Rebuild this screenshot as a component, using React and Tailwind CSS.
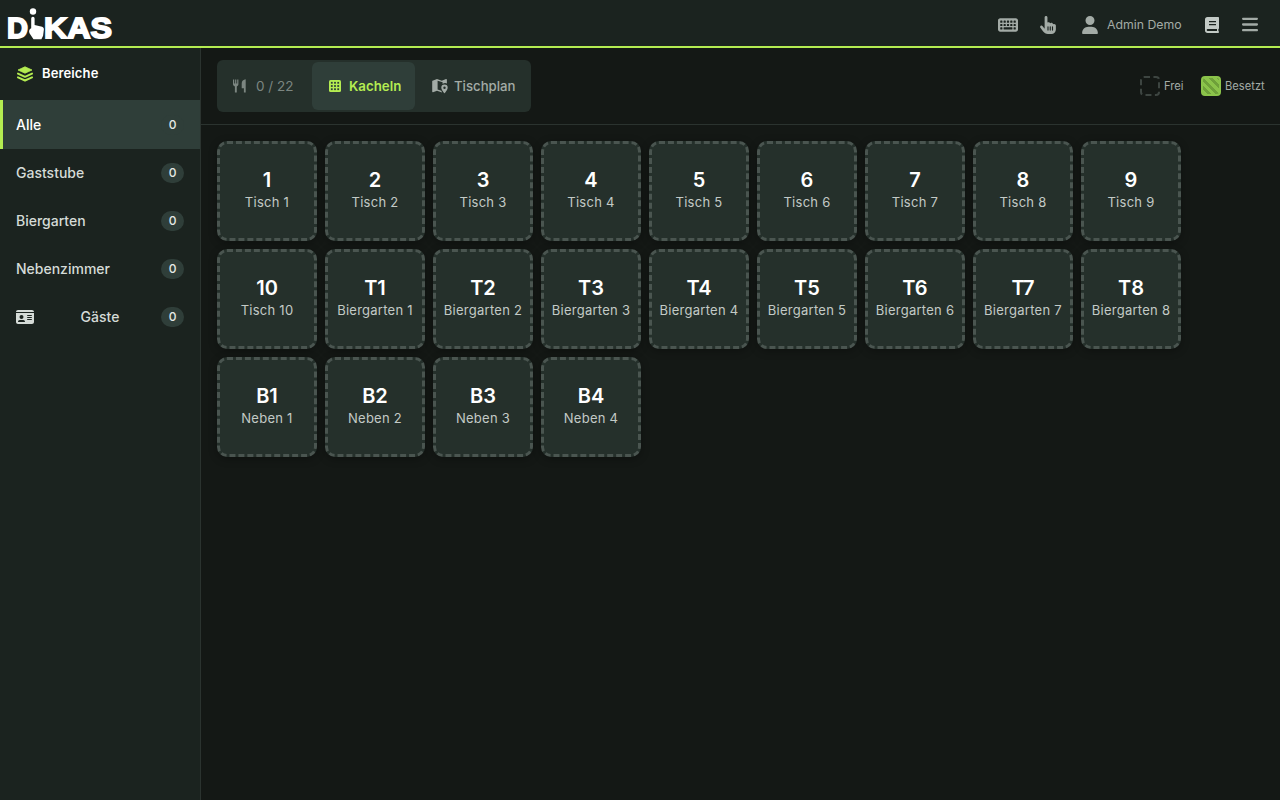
import { FaKeyboard, FaHandPointer, FaUser, FaBars, FaIdCard } from 'react-icons/fa6';

const areas = ['Alle', 'Gaststube', 'Biergarten', 'Nebenzimmer'];

const tables = [
  ...Array.from({ length: 10 }, (_, i) => ({ id: `${i + 1}`, name: `Tisch ${i + 1}` })),
  ...Array.from({ length: 8 }, (_, i) => ({ id: `T${i + 1}`, name: `Biergarten ${i + 1}` })),
  ...Array.from({ length: 4 }, (_, i) => ({ id: `B${i + 1}`, name: `Neben ${i + 1}` })),
];

function Logo() {
  return (
    <svg width="106" height="38" viewBox="0 0 106 38" className="overflow-visible" fill="#fff">
      <g fontFamily="'Liberation Sans', Arial, sans-serif" fontWeight="700" fontSize="29.5" stroke="#fff" strokeWidth="1.8">
        <text x="-1" y="32.2" textLength="21" lengthAdjust="spacingAndGlyphs">D</text>
        <text x="36" y="32.2" textLength="68" lengthAdjust="spacingAndGlyphs">KAS</text>
      </g>
      <circle cx="25" cy="5.5" r="3.2" />
      <path
        d="M23.2 12.5a1.7 1.7 0 0 1 3.4 0V19l7.5 1.8c1.2.4 1.9 1.300 1.8 2.600l-.8 6.400-1.700 3.400H25.500l-4-6c-.9-2-.3-4.500 1.700-5z"
        stroke="#1b231f"
        strokeWidth="1.2"
        paintOrder="stroke"
      />
    </svg>
  );
}

function LayersIcon() {
  return (
    <svg width="16" height="16" viewBox="0 0 16 16" className="text-[#b4ec51]" fill="currentColor">
      <path d="M8 .8 15 4 8 7.2 1 4z" stroke="currentColor" strokeWidth=".8" strokeLinejoin="round" />
      <path d="M1 7.6 8 10.8l7-3.2M1 11.3l7 3.2 7-3.2" fill="none" stroke="currentColor" strokeWidth="2" strokeLinecap="round" strokeLinejoin="round" />
    </svg>
  );
}

function BookIcon() {
  return (
    <svg width="14" height="16" viewBox="0 0 14 16" className="text-[#c3cac6]" fill="currentColor">
      <path fillRule="evenodd" d="M2.5 0H13c.6 0 1 .4 1 1v10.200c0 .4-.2.700-.6.900v1.900c.5.2.6.5.6 1s-.4 1-1 1H2.700A2.700 2.700 0 0 1 0 13.300V2.500A2.500 2.500 0 0 1 2.500 0M4 4v1.300h7V4zm0 3v1.300h7V7zM2.700 12a1 1 0 0 0 0 2H12v-2z" />
    </svg>
  );
}

function UtensilsIcon() {
  return (
    <svg width="14" height="14" viewBox="0 0 14 14" fill="currentColor">
      <path d="M0 .4h1.200v4h.9v-4h1.200v4h.9v-4h1.200V5c0 1.300-.6 2.100-1.600 2.500v6H1.900v-6C.7 7.100 0 6.300 0 5zM12.700.2v13.300h-1.800V9.300H8.700V4.400c0-2.400 1.700-4 4-4.200" />
    </svg>
  );
}

function TilesIcon() {
  return (
    <svg width="12" height="12" viewBox="0 0 12 12">
      <rect width="12" height="12" rx="1.5" fill="currentColor" />
      <g fill="#2f3e39">
        {[1.9, 5.1, 8.3].map((y) =>
          [1.9, 5.1, 8.3].map((x) => <rect key={`${x}-${y}`} x={x} y={y} width="1.8" height="1.8" />)
        )}
      </g>
    </svg>
  );
}

function MapPinIcon() {
  return (
    <svg width="16" height="16" viewBox="0 0 16 16" fill="currentColor">
      <path
        fillRule="evenodd"
        d="M1.200 2.500 5 1.100l4.800 1.600L14 1.100c.5-.1.900.1.900.6v3.700a4.500 4.500 0 0 0-4.300.5V4.200L5.600 2.700v8.700l3.700 1.300.8 1.700-5.100-1.600-4 1.400c-.5.1-.8-.1-.8-.6V3.200c0-.3.300-.6 1-.7"
      />
      <path fillRule="evenodd" d="M12.500 6.500a3.200 3.200 0 0 1 3.200 3.200c0 2.200-3.200 5.600-3.200 5.600s-3.200-3.400-3.200-5.600a3.200 3.200 0 0 1 3.200-3.200m0 2.100a1.200 1.200 0 1 0 0 2.400 1.200 1.200 0 0 0 0-2.400" />
    </svg>
  );
}

function Badge() {
  return (
    <span className="flex h-5 w-[23px] items-center justify-center rounded-full bg-[#2f3e39] text-xs font-medium text-[#e4e9e5]">
      0
    </span>
  );
}

function Header() {
  return (
    <header className="flex h-12 shrink-0 items-center border-b-2 border-[#b4ec51] bg-[#1b231f] pt-[3px] pl-2 text-[#a3aba6]">
      <Logo />
      <div className="ml-auto flex items-center pr-[22px]">
        <FaKeyboard className="mr-[22px] h-[18px] w-5" />
        <FaHandPointer className="mr-[26px] h-[18px] w-4" />
        <FaUser className="mr-[9px] h-[18px] w-4" />
        <span className="mr-[23px] w-[75px] pt-px text-[12.3px] whitespace-nowrap">Admin Demo</span>
        <span className="mr-[23px]">
          <BookIcon />
        </span>
        <FaBars className="h-[19px] w-4" />
      </div>
    </header>
  );
}

function Sidebar() {
  return (
    <aside className="w-[201px] shrink-0 border-r border-[#2b332f] bg-[#1b231f]">
      <div className="flex h-[52px] items-center gap-[9px] pl-[17px] text-[13px] font-semibold tracking-[0.01em] text-white">
        <LayersIcon />
        <span className="pb-px">Bereiche</span>
      </div>
      <nav className="text-[14px] font-medium text-[#d5dbd7]">
        {areas.map((area, i) => (
          <div
            key={area}
            className={`flex items-center justify-between px-4 ${
              i === 0 ? 'h-[49px] border-l-3 border-[#b4ec51] bg-[#2f3e39] pl-[13px] text-white' : 'h-12'
            }`}
          >
            <span className="pb-px">{area}</span>
            <Badge />
          </div>
        ))}
        <div className="flex h-12 items-center justify-between px-4">
          <FaIdCard className="h-4 w-[18px]" />
          <span className="pb-px pl-[5px]">Gäste</span>
          <Badge />
        </div>
      </nav>
    </aside>
  );
}

function Toolbar() {
  return (
    <div className="flex h-[77px] shrink-0 items-center justify-between border-b border-[#2b332f] px-4">
      <div className="flex h-[52px] w-[314px] items-center rounded-md bg-[#25302b] p-0.5 text-[13.5px] font-medium text-[#a3aba6]">
        <div className="flex w-[93px] items-center gap-[9px] pl-[14px] font-normal text-[#7c8681]">
          <UtensilsIcon />
          <span className="pt-px">0 / 22</span>
        </div>
        <button className="flex h-12 w-[103px] items-center gap-2 rounded-md bg-[#2f3e39] pb-px pl-[17px] text-[13.3px] font-semibold text-[#b4ec51]">
          <TilesIcon />
          <span className="pt-0.5">Kacheln</span>
        </button>
        <button className="flex h-12 items-center gap-1.5 pb-px pl-[17px] text-[13.2px]">
          <MapPinIcon />
          <span className="pt-0.5">Tischplan</span>
        </button>
      </div>
      <div className="flex items-center gap-4 text-[11.2px] text-[#a3aba6]">
        <div className="flex items-center gap-1">
          <span className="h-5 w-5 rounded border-2 border-dashed border-[#3d4541]" />
          <span className="w-[21px] pt-px">Frei</span>
        </div>
        <div className="flex items-center gap-1">
          <span className="h-5 w-5 rounded border-2 border-[#8bc34a] bg-[repeating-linear-gradient(45deg,#8bc34a_0_3px,#6fa03a_3px_6px)]" />
          <span className="w-[39px] pt-px">Besetzt</span>
        </div>
      </div>
    </div>
  );
}

export default function App() {
  return (
    <div className="flex h-screen flex-col overflow-hidden bg-[#141815] font-['Inter',sans-serif]">
      <Header />
      <div className="flex min-h-0 flex-1">
        <Sidebar />
        <main className="flex flex-1 flex-col">
          <Toolbar />
          <div className="flex flex-wrap gap-2 p-4">
            {tables.map((table) => (
              <button
                key={table.id}
                className="flex h-[100px] w-[100px] flex-col items-center justify-center rounded-[10px] border-3 border-dashed border-[#4a5550] bg-[#25302b] pb-0.5 whitespace-nowrap shadow-[0_2px_8px_rgba(0,0,0,0.3)]"
              >
                <span className="text-[20px] leading-6 font-semibold text-white">{table.id}</span>
                <span className="text-[13px] leading-5 tracking-[0.02em] text-[#c3cac6]">{table.name}</span>
              </button>
            ))}
          </div>
        </main>
      </div>
    </div>
  );
}
